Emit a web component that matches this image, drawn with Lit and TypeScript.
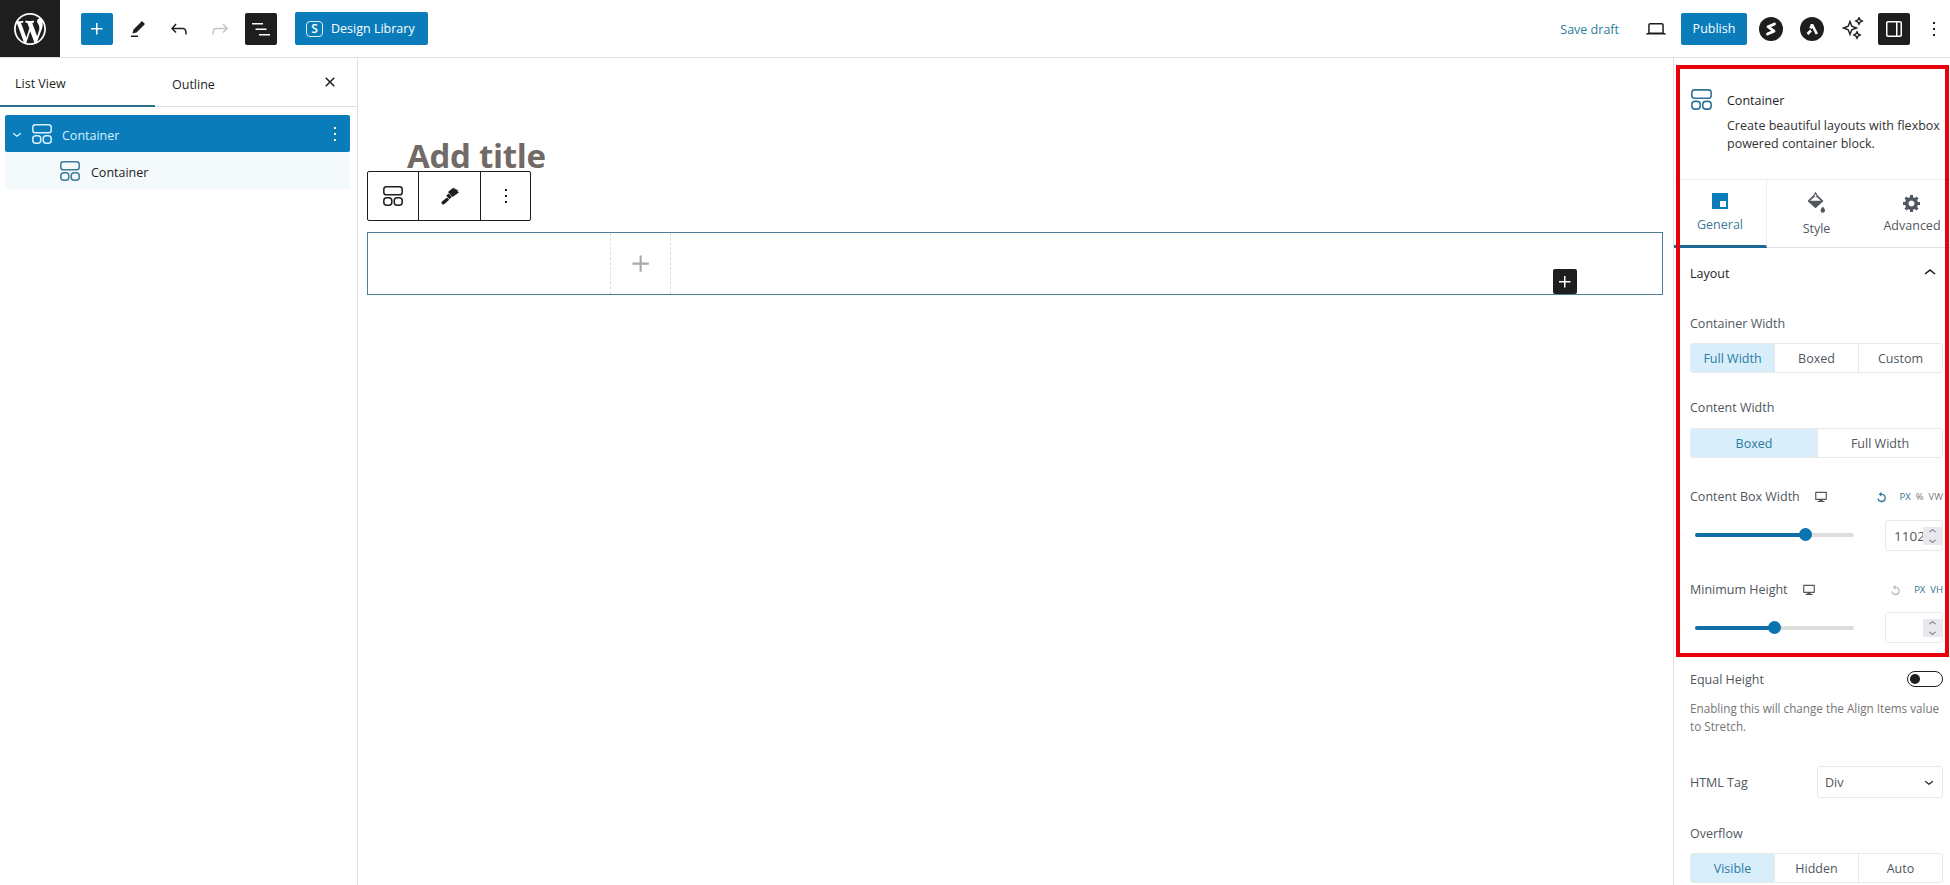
import { LitElement, html, css, svg } from "lit";
import { customElement } from "lit/decorators.js";

const P = {
  wp: "M20 10c0-5.51-4.49-10-10-10C4.48 0 0 4.49 0 10c0 5.52 4.48 10 10 10 5.51 0 10-4.48 10-10zM7.78 15.37L4.37 6.22c.55-.02 1.17-.08 1.17-.08.5-.06.44-1.13-.06-1.11 0 0-1.45.11-2.37.11-.18 0-.37 0-.58-.01C4.12 2.69 6.87 1.11 10 1.11c2.33 0 4.45.87 6.05 2.34-.68-.11-1.65.39-1.65 1.58 0 .74.45 1.36.9 2.1.35.61.55 1.36.55 2.46 0 1.49-1.4 5-1.4 5l-3.03-8.37c.54-.02.82-.17.82-.17.5-.05.44-1.25-.06-1.22 0 0-1.44.12-2.38.12-.87 0-2.33-.12-2.33-.12-.5-.03-.56 1.2-.06 1.22l.92.08 1.26 3.41zM17.41 10c.24-.64.74-1.87.43-4.25.7 1.29 1.05 2.71 1.05 4.25 0 3.29-1.73 6.24-4.4 7.78.97-2.59 1.94-5.2 2.92-7.78zM6.1 18.09C3.12 16.65 1.11 13.53 1.11 10c0-1.3.23-2.48.72-3.59C3.25 10.3 4.67 14.2 6.1 18.09zm4.03-6.63l2.58 6.98c-.86.29-1.76.45-2.71.45-.79 0-1.57-.11-2.29-.33.81-2.38 1.62-4.74 2.42-7.1z",
  plus: "M11 12.5V17.5H12.5V12.5H17.5V11H12.5V6H11V11H6V12.5H11Z",
  pencil: "m19 7-3-3-8.5 8.5-1 4 4-1L19 7Zm-7 11.5H5V20h7v-1.5Z",
  undo: "M18.3 11.7c-.6-.6-1.4-.9-2.3-.9H6.7l2.9-3.3-1.1-1-4.5 5L8.5 16l1-1-2.7-2.7H16c.5 0 .9.2 1.3.5 1 1 1 3.4 1 4.5v.3h1.5v-.2c0-1.5 0-4.3-1.5-5.7z",
  redo: "M15.6 6.5l-1.1 1 2.9 3.3H8c-.9 0-1.7.3-2.3.9-1.4 1.5-1.4 4.2-1.4 5.6v.2h1.5v-.3c0-1.1 0-3.5 1-4.5.3-.3.7-.5 1.3-.5h9.2L14.5 15l1.1 1.1 4.6-4.6-4.6-5z",
  list: "M3 6h11v1.5H3V6Zm3.5 5.5h11V13h-11v-1.5ZM21 17H10v1.5h11V17Z",
  close: "M12 13.06l3.712 3.713 1.061-1.06L13.061 12l3.712-3.712-1.06-1.06L12 10.938 8.288 7.227l-1.061 1.06L10.939 12l-3.712 3.712 1.06 1.061L12 13.061z",
  more: "M13 19h-2v-2h2v2zm0-6h-2v-2h2v2zm0-6h-2V5h2v2z",
  laptop: "M20.5 16h-.7V8c0-1.1-.9-2-2-2H6.2c-1.1 0-2 .9-2 2v8h-.7c-.8 0-1.5.7-1.5 1.5h20c0-.8-.7-1.5-1.5-1.5zM5.7 8c0-.3.2-.5.5-.5h11.6c.3 0 .5.2.5.5v7.6H5.7V8z",
  drawer: "M18 4H6c-1.1 0-2 .9-2 2v12c0 1.1.9 2 2 2h12c1.1 0 2-.9 2-2V6c0-1.1-.9-2-2-2zm-4 14.5H6c-.3 0-.5-.2-.5-.5V6c0-.3.2-.5.5-.5h8v13zm4.5-.5c0 .3-.2.5-.5.5h-2.5v-13H18c.3 0 .5.2.5.5v12z",
  down: "M17.5 11.6L12 16l-5.5-4.4.9-1.2L12 14l4.5-3.6 1 1.2z",
  up: "M6.5 12.4L12 8l5.5 4.4-.9 1.2L12 10l-4.5 3.6-1-1.2z",
  gear: "M18 12h-2.18c-.17.7-.44 1.35-.81 1.93l1.54 1.54-2.1 2.1-1.54-1.54c-.58.36-1.23.63-1.91.79V19H8v-2.18c-.68-.16-1.33-.43-1.91-.79l-1.54 1.54-2.12-2.12 1.54-1.54c-.36-.58-.63-1.23-.79-1.91H1V9.03h2.17c.16-.7.44-1.35.8-1.94L2.43 5.55l2.1-2.1 1.54 1.54c.58-.37 1.24-.64 1.93-.81V2h3v2.18c.68.16 1.33.43 1.91.79l1.54-1.54 2.12 2.12-1.54 1.54c.36.59.64 1.24.8 1.94H18V12zm-8.5 1.5c1.66 0 3-1.34 3-3s-1.34-3-3-3-3 1.34-3 3 1.34 3 3 3z",
  brush: "M2 15.500l5-4 2.200 2.300L4.500 18c-.8.7-1.800.6-2.500-.1-.7-.8-.8-1.500 0-2.400zM6.200 9.800l2.300-2.300 3.300 3.300-2.200 2.400zM8 6l5.500-4.500.3 1.500 1.400-1 .2 1.500 1.400-.6-.1 1.600 1.800-.2-.8 1.400 1.300.7-6.500 4.600z",
  desktop: "M3 3h18c.6 0 1 .4 1 1v12c0 .6-.4 1-1 1h-6v2h3v1.5H6V19h3v-2H3c-.6 0-1-.4-1-1V4c0-.6.4-1 1-1zm1 2v10h16V5z",
  reset: "M12 5V1.5L7 6l5 4.500V7a5.500 5.500 0 1 1-5.300 7H4.400A7.800 7.800 0 1 0 12 5z",
};

const ico = (d: string, size = 24, box = 24) =>
  html`<svg class="ico" width=${size} height=${size} viewBox="0 0 ${box} ${box}" fill="currentColor"><path d=${d}></path></svg>`;

const containerIco = (w = 20) =>
  html`<svg class="ico" width=${w} height=${w} viewBox="0 0 20 20" fill="none" stroke="currentColor" stroke-width="1.5">
    ${svg`<rect x="0.8" y="0.8" width="18.4" height="8" rx="2.6"></rect><rect x="0.8" y="11.8" width="8" height="7.4" rx="3"></rect><rect x="11.2" y="11.8" width="8" height="7.4" rx="3"></rect>`}
  </svg>`;

@customElement("app-root")
export class AppRoot extends LitElement {
  static styles = css`
    :host { display: block; width: 1950px; height: 885px; overflow: hidden; position: relative; background: #fff; color: #1e1e1e; font-family: "Open Sans", "Noto Sans", sans-serif; font-size: 12.5px; }
    * { box-sizing: border-box; }
    .ico { display: block; flex: none; }

    .top { height: 58px; display: flex; align-items: center; border-bottom: 1px solid #e0e0e0; }
    .wp { width: 60px; height: 57px; background: #1e1e1e; color: #fff; display: flex; align-items: center; justify-content: center; margin-right: 21px; }
    .sq { width: 32px; height: 32px; border-radius: 2px; display: flex; align-items: center; justify-content: center; flex: none; }
    .blue { background: #0a7cba; color: #fff; }
    .dark { background: #1e1e1e; color: #fff; }
    .gap9 { margin-left: 9px; }
    .muted { color: #c4c4c4; }
    .lib { height: 33px; width: 133px; margin-left: 18px; background: #0a7cba; color: #fff; border-radius: 2px; display: flex; align-items: center; gap: 8px; padding-left: 11px; font-size: 12.5px; }
    .lib-s { width: 17px; height: 16px; border: 1.5px solid #d9f0fb; border-radius: 4px; font-size: 12px; font-weight: 600; line-height: 13px; text-align: center; }
    .spacer { flex: 1; }
    .save { color: #2c7da0; margin-right: 25px; padding-top: 2px; }
    .pub { width: 66px; height: 32px; background: #0a7cba; color: #fff; border-radius: 2px; display: flex; align-items: center; justify-content: center; margin: 0 12px 0 13px; }
    .circ { width: 24px; height: 24px; }
    .r-a { margin-left: 17px; }
    .r-b { margin-left: 17px; }
    .r-c { margin-left: 13px; }
    .r-d { margin-left: 8px; }

    .main { display: flex; height: 827px; }
    .left { width: 358px; border-right: 1px solid #e0e0e0; flex: none; }
    .ltabs { height: 49px; display: flex; align-items: center; border-bottom: 1px solid #e0e0e0; }
    .lt { height: 49px; width: 155px; display: flex; align-items: center; padding: 4px 0 0 15px; }
    .lt.on { border-bottom: 2px solid #2d6f8e; }
    .lt.out { padding-left: 17px; width: 157px; }
    .lclose { margin-left: 6px; }
    .tree { padding: 8px 7px 0 5px; }
    .row { height: 37px; display: flex; align-items: center; }
    .row .lbl { padding-top: 4px; }
    .row.sel { background: #0a7cba; color: #d6f1ff; border-radius: 2px; padding-left: 3px; }
    .row.sel .more { margin-left: auto; margin-right: 3px; color: #fff; }
    .row.sel .chev { margin-right: 6px; color: #e8f7ff; }
    .row.sel .lbl { margin-left: 10px; }
    .row.child { background: #f4f9fb; padding-left: 55px; }
    .row.child .ico { color: #3d7a99; }
    .row.child .lbl { margin-left: 11px; }

    .center { flex: 1; padding: 0 10px 0 9px; min-width: 0; }
    .title { font-family: "Open Sans", sans-serif; font-weight: 700; font-size: 33px; line-height: 40px; color: #716a66; padding: 78px 0 0 40px; height: 113px; letter-spacing: -.3px; }
    .bar { width: 164px; height: 50px; border: 1px solid #1e1e1e; border-radius: 2px; display: flex; background: #fff; }
    .cell { display: flex; align-items: center; justify-content: center; border-right: 1px solid #1e1e1e; }
    .cell:nth-child(1) { width: 51px; }
    .cell:nth-child(2) { width: 62px; }
    .cell:nth-child(3) { flex: 1; border-right: 0; }
    .block { margin-top: 11px; height: 63px; border: 1px solid #4f7f96; position: relative; padding-left: 242px; }
    .slot { width: 61px; height: 100%; border-left: 1px dashed #ddd; border-right: 1px dashed #ddd; display: flex; align-items: center; justify-content: center; color: #a8a8a8; }
    .add { position: absolute; right: 85px; bottom: 0; width: 24px; height: 25px; border-radius: 2px; background: #1e1e1e; color: #fff; display: flex; align-items: center; justify-content: center; }

    .side { width: 277px; flex: none; border-left: 1px solid #e0e0e0; }
    .head { height: 121px; display: flex; padding: 31px 7px 0 17px; gap: 15px; }
    .head .ico { color: #2f7396; }
    .head-text { padding-top: 1px; }
    .head h2 { margin: 0 0 5px; font-size: 12.5px; font-weight: 400; line-height: 22px; }
    .head p { margin: 0; line-height: 18px; color: #333; white-space: nowrap; }
    .tabs { height: 69px; display: grid; grid-template-columns: 93px 97px 86px; border-top: 1px solid #eee; border-bottom: 1px solid #e0e0e0; }
    .tab { display: flex; flex-direction: column; align-items: center; padding-top: 13px; color: #50575e; }
    .tab.on { border-right: 1px solid #eee; border-bottom: 3px solid #1d6a94; height: 68px; color: #3d7a99; }
    .tab svg { color: #50575e; }
    .tab.on svg { color: #0a7cba; }
    .tab span { margin-top: 7px; line-height: 18px; }
    .tab.style { padding: 11px 0 0 2px; }
    .tab.style span { margin-top: 6px; }
    .tab.adv { padding-left: 10px; }
    .tab.adv span { margin-top: 4px; }
    .body { padding: 0 7px 0 16px; color: #50575e; }
    .lay { height: 50px; display: flex; align-items: center; justify-content: space-between; color: #1e1e1e; padding-right: 1px; }
    .lab { height: 20px; line-height: 20px; display: flex; align-items: center; }
    .low { padding-top: 2px; }
    .seg { height: 30px; display: grid; border: 1px solid #e8e8e8; border-radius: 3px; margin-top: 10px; }
    .seg.three { grid-template-columns: 83px 84px 1fr; }
    .seg.two { grid-template-columns: 126px 1fr; }
    .seg > div { display: flex; align-items: center; justify-content: center; border-left: 1px solid #e8e8e8; }
    .seg > div:first-child { border-left: 0; }
    .seg > .on { background: #d8eefb; color: #2b7ba3; }
    .m15 { margin-top: 15px; }
    .m25 { margin-top: 25px; }
    .m29 { margin-top: 29px; }
    .m26 { margin-top: 26px; }
    .head-row { justify-content: flex-start; }
    .head-row .dev { margin-left: 14px; color: #50575e; }
    .units { margin-left: auto; display: flex; align-items: center; gap: 5px; font-size: 9.5px; color: #2f7396; }
    .units .rst { color: #2f7396; margin-right: 7px; }
    .units .rst.off { color: #bbb; }
    .units .g { color: #777; }
    .sl { display: flex; align-items: center; height: 31px; margin-top: 13px; }
    .sl.b { margin-top: 12px; }
    .track { width: 159px; height: 4px; border-radius: 3px; background: #ddd; margin: 0 0 2px 5px; position: relative; }
    .sl.b .track { margin-bottom: 0; }
    .fill { height: 100%; border-radius: 3px; background: #0f6ea6; position: relative; }
    .thumb { position: absolute; right: -6px; top: -4.5px; width: 13px; height: 13px; border-radius: 50%; background: #0a74ae; }
    .num { margin-left: auto; width: 58px; height: 100%; border: 1px solid #e8e8e8; border-radius: 3px; position: relative; display: flex; align-items: center; padding-left: 8px; font-size: 13.5px; color: #50575e; }
    .spin { position: absolute; right: 0; top: 6px; width: 19px; height: 18px; background: #e8e8ee; display: flex; flex-direction: column; align-items: center; justify-content: center; color: #777; }
    .spin svg { margin: -3px 0; }
    .eq { height: 20px; display: flex; align-items: center; justify-content: space-between; }
    .tog { width: 36px; height: 16px; border: 1.5px solid #1e1e1e; border-radius: 8px; padding: 2px; }
    .tog i { display: block; width: 10px; height: 10px; border-radius: 50%; background: #1e1e1e; }
    .help { margin: 10px 0 0; font-size: 11.7px; line-height: 18px; color: #757575; white-space: nowrap; }
    .html { height: 32px; display: flex; align-items: center; justify-content: space-between; margin-top: 31px; }
    .sel-box { width: 126px; height: 100%; border: 1px solid #e8e8e8; border-radius: 3px; display: flex; align-items: center; justify-content: space-between; padding: 0 4px 0 7px; }
    .sel-box svg { color: #1e1e1e; }
    .m9 { margin-top: 9px; }
    .frame { position: absolute; left: 1676px; top: 65px; width: 273px; height: 592px; border: 4px solid #e8000b; pointer-events: none; }
  `;

  private unitRow(label: string, units: unknown, off: boolean, cls: string) {
    return html`<div class="lab head-row ${cls}">
      <span>${label}</span><span class="dev">${ico(P.desktop, 14)}</span>
      <span class="units"><span class="rst ${off ? "off" : ""}">${ico(P.reset, 13)}</span>${units}</span>
    </div>`;
  }

  private slider(pct: number, value: string, cls: string) {
    return html`<div class="sl ${cls}">
      <div class="track"><div class="fill" style="width:${pct}%"><div class="thumb"></div></div></div>
      <div class="num">${value}<div class="spin">${ico(P.up, 15)}${ico(P.down, 15)}</div></div>
    </div>`;
  }

  render() {
    return html`
      <div class="top">
        <div class="wp">${ico(P.wp, 32, 20)}</div>
        <div class="sq blue">${ico(P.plus)}</div>
        <div class="sq gap9">${ico(P.pencil)}</div>
        <div class="sq gap9">${ico(P.undo)}</div>
        <div class="sq gap9 muted">${ico(P.redo)}</div>
        <div class="sq dark gap9">${ico(P.list)}</div>
        <div class="lib"><div class="lib-s">S</div><span>Design Library</span></div>
        <div class="spacer"></div>
        <span class="save">Save draft</span>
        ${ico(P.laptop)}
        <div class="pub">Publish</div>
        <svg class="ico circ" viewBox="0 0 24 24"><circle cx="12" cy="12" r="12" fill="#1e1e1e"></circle><path fill="none" stroke="#fff" stroke-width="2.8" stroke-linejoin="round" stroke-linecap="round" d="M15.500 7L9 9.700l6 4.400L8.500 17"></path></svg>
        <svg class="ico circ r-a" viewBox="0 0 24 24"><circle cx="12" cy="12" r="12" fill="#1e1e1e"></circle><path fill="none" stroke="#fff" stroke-width="2.600" stroke-linejoin="round" d="M7.500 17l3.500-3.500M12 7.500l-1.500 4 M12 7.500l4.800 9.500"></path></svg>
        <svg class="ico r-b" width="24" height="24" viewBox="0 0 24 24" fill="none" stroke="#1e1e1e" stroke-width="1.4"><path d="M9 4.500l1.800 4.700 4.700 1.800-4.700 1.800L9 17.500l-1.800-4.700L2.500 11l4.700-1.800z"></path><path d="M18 .8l1.100 2.100 2.100 1.100-2.100 1.100L18 7.200l-1.100-2.100L14.800 4l2.100-1.100z"></path><path d="M16 14.800l1.100 2.100 2.100 1.100-2.100 1.100L16 21.200l-1.100-2.100L12.800 18l2.100-1.100z"></path></svg>
        <div class="sq dark r-c">${ico(P.drawer)}</div>
        <div class="sq r-d">${ico(P.more)}</div>
      </div>
      <div class="main">
        <div class="left">
          <div class="ltabs">
            <div class="lt on">List View</div>
            <div class="lt out">Outline</div>
            <div class="lclose">${ico(P.close, 24)}</div>
          </div>
          <div class="tree">
            <div class="row sel">
              <span class="chev">${ico(P.down, 18)}</span>${containerIco()}<span class="lbl">Container</span>
              <span class="more">${ico(P.more, 24)}</span>
            </div>
            <div class="row child">${containerIco()}<span class="lbl">Container</span></div>
          </div>
        </div>
        <div class="center">
          <div class="title">Add title</div>
          <div class="bar">
            <div class="cell">${containerIco()}</div>
            <div class="cell">${ico(P.brush, 20, 20)}</div>
            <div class="cell">${ico(P.more, 24)}</div>
          </div>
          <div class="block">
            <div class="slot">${ico(P.plus, 34)}</div>
            <div class="add">${ico(P.plus, 24)}</div>
          </div>
        </div>
        <div class="side">
          <div class="head">
            ${containerIco(21)}
            <div class="head-text">
              <h2>Container</h2>
              <p>Create beautiful layouts with flexbox<br />powered container block.</p>
            </div>
          </div>
          <div class="tabs">
            <div class="tab on">
              <svg width="16" height="16" viewBox="0 0 16 16"><path fill="currentColor" d="M0 0h16v16H0z"></path><path fill="#fff" d="M8 8h6v6H8z"></path></svg>
              <span>General</span>
            </div>
            <div class="tab style">
              <svg width="18" height="23" viewBox="0 0 18 23" fill="currentColor"><path d="M7.500 .8L9.800 4.600 15.500 10 7.500 17.300-.5 10 5.200 4.600zM6.300 5.100h2.400L7.500 3.100zM2 9.800h11L7.500 4.900z" fill-rule="evenodd"></path><path d="M14.800 15.500c1 1.500 2.200 2.700 2.200 4a2.200 2.200 0 0 1-4.400 0c0-1.300 1.200-2.500 2.200-4z"></path></svg>
              <span>Style</span>
            </div>
            <div class="tab adv">
              ${ico(P.gear, 20, 20)}
              <span>Advanced</span>
            </div>
          </div>
          <div class="body">
            <div class="lay"><span>Layout</span>${ico(P.up, 24)}</div>
            <div class="lab m15 low">Container Width</div>
            <div class="seg three"><div class="on">Full Width</div><div>Boxed</div><div>Custom</div></div>
            <div class="lab m25">Content Width</div>
            <div class="seg two"><div class="on">Boxed</div><div>Full Width</div></div>
            ${this.unitRow("Content Box Width", html`<span>PX</span><span class="g">%</span><span class="g">VW</span>`, false, "m29")}
            ${this.slider(70, "1102", "")}
            ${this.unitRow("Minimum Height", html`<span>PX</span><span>VH</span>`, true, "m29")}
            ${this.slider(50, "", "b")}
            <div class="eq m26"><span>Equal Height</span><div class="tog"><i></i></div></div>
            <p class="help">Enabling this will change the Align Items value<br />to Stretch.</p>
            <div class="html"><span>HTML Tag</span><div class="sel-box"><span>Div</span>${ico(P.down, 18)}</div></div>
            <div class="lab m26">Overflow</div>
            <div class="seg three m9"><div class="on">Visible</div><div>Hidden</div><div>Auto</div></div>
          </div>
        </div>
      </div>
      <div class="frame"></div>
    `;
  }
}
